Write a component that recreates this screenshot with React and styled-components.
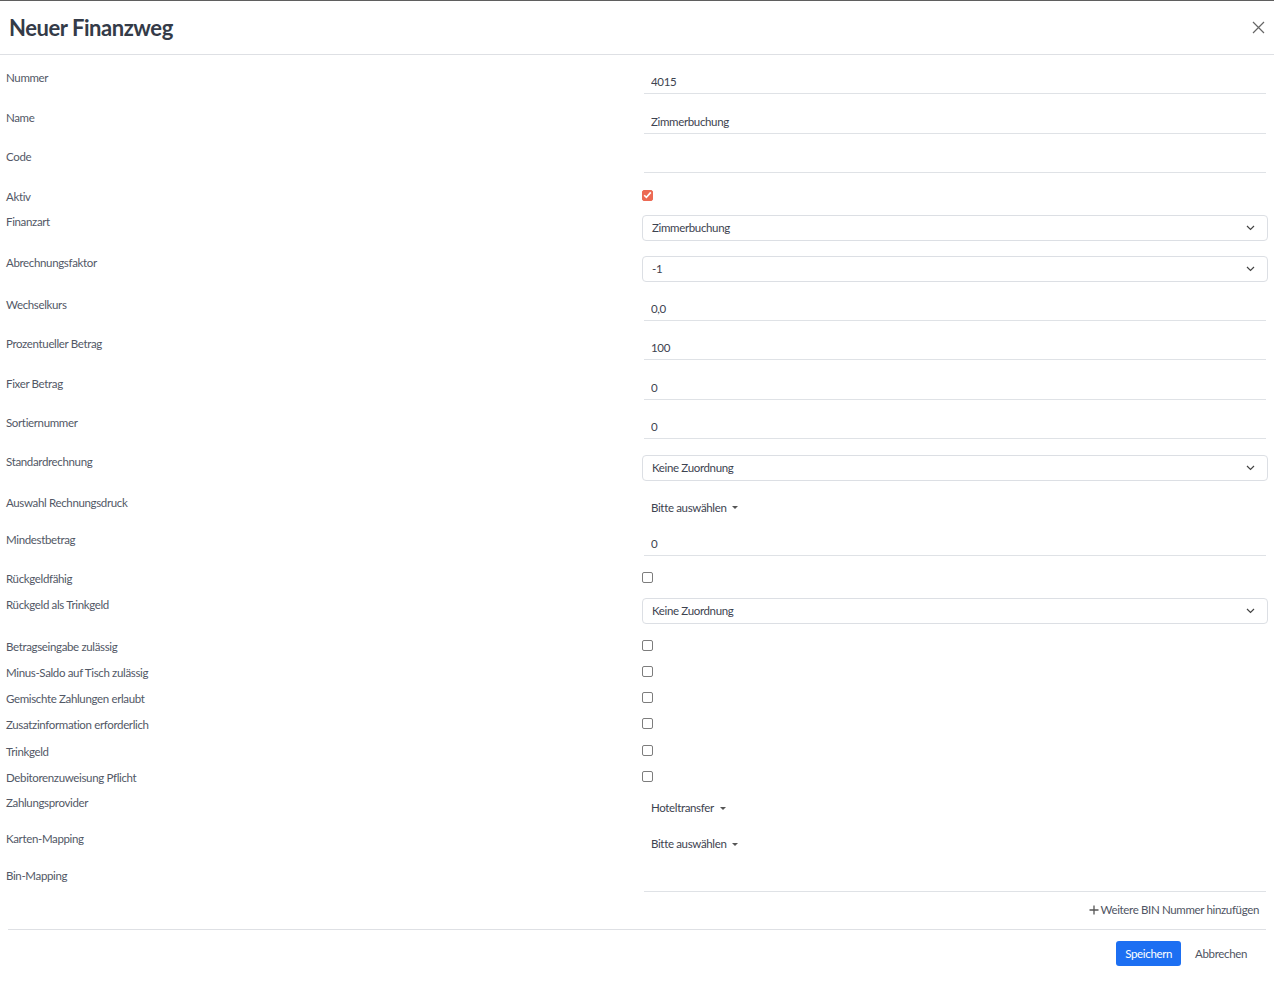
import React from "react";
import styled, { createGlobalStyle } from "styled-components";

const GlobalStyle = createGlobalStyle`
  html, body {
    margin: 0;
    padding: 0;
    background: #ffffff;
  }
  body {
    font-family: Lato, "Liberation Sans", Arial, sans-serif;
    color: #4f5563;
    letter-spacing: -0.35px;
  }
  * {
    box-sizing: border-box;
  }
`;

const Modal = styled.div`
  width: 1274px;
  min-height: 983px;
  border-top: 1px solid #5f5f5f;
  background: #ffffff;
`;

const Header = styled.div`
  display: flex;
  align-items: center;
  justify-content: space-between;
  height: 54px;
  padding: 0 8px 0 9px;
  border-bottom: 1px solid #dee0e4;
`;

const Title = styled.h1`
  margin: 0;
  font-size: 22px;
  font-weight: 700;
  color: #343b48;
  letter-spacing: -0.45px;
`;

const CloseButton = styled.button`
  display: flex;
  align-items: center;
  justify-content: center;
  width: 16px;
  height: 16px;
  padding: 0;
  border: none;
  background: none;
  cursor: pointer;
`;

const Body = styled.div`
  padding: 15px 6px 0 6px;
`;

const Row = styled.div`
  display: grid;
  grid-template-columns: 636px 1fr;
  align-items: start;
  height: ${(p) => p.h}px;
`;

const Label = styled.div`
  font-size: 11.5px;
  line-height: 14px;
  color: #525866;
  padding-top: ${(p) => p.offset || 0}px;
`;

const TextInput = styled.input`
  display: block;
  width: calc(100% - 4px);
  height: 24px;
  margin: 0 2px;
  padding: 0 7px;
  border: none;
  border-bottom: 1px solid #dfe2e6;
  outline: none;
  font-family: inherit;
  font-size: 11.5px;
  letter-spacing: inherit;
  color: #3d4350;
  background: transparent;
`;

const SelectBox = styled.div`
  display: flex;
  align-items: center;
  justify-content: space-between;
  height: 26px;
  padding: 0 12px 0 9px;
  border: 1px solid #dcdfe4;
  border-radius: 4px;
  font-size: 11.5px;
  color: #3d4350;
`;

const CheckBox = styled.span`
  display: flex;
  align-items: center;
  justify-content: center;
  width: 11px;
  height: 11px;
  margin-top: 1px;
  border: 1px solid ${(p) => (p.checked ? "#ec6a54" : "#7d7d7d")};
  border-radius: 2px;
  background: ${(p) => (p.checked ? "#ec6a54" : "#ffffff")};
`;

const Dropdown = styled.div`
  display: flex;
  align-items: center;
  gap: 6px;
  margin-top: 5px;
  padding-left: 9px;
  font-size: 11.5px;
  line-height: 14px;
  color: #3d4350;
`;

const Caret = styled.span`
  width: 0;
  height: 0;
  border-left: 3px solid transparent;
  border-right: 3px solid transparent;
  border-top: 3px solid #555;
`;

const AddRow = styled.div`
  display: flex;
  justify-content: flex-end;
  padding-right: 9px;
  margin-bottom: 12px;
`;

const AddLink = styled.button`
  display: flex;
  align-items: center;
  gap: 2px;
  padding: 0;
  border: none;
  background: none;
  font-family: inherit;
  font-size: 11.5px;
  letter-spacing: inherit;
  line-height: 14px;
  color: #4f5563;
  cursor: pointer;
`;

const Footer = styled.div`
  display: flex;
  justify-content: flex-end;
  align-items: center;
  gap: 2px;
  margin: 0 2px;
  padding-top: 11px;
  border-top: 1px solid #dee0e4;
`;

const Button = styled.button`
  height: 25px;
  padding: 0 ${(p) => (p.primary ? 9 : 12)}px;
  margin-right: ${(p) => (p.primary ? 0 : 7)}px;
  border: none;
  border-radius: 3px;
  background: ${(p) => (p.primary ? "#1d6ff2" : "transparent")};
  color: ${(p) => (p.primary ? "#ffffff" : "#4f5563")};
  font-family: inherit;
  font-size: 11.5px;
  letter-spacing: inherit;
  cursor: pointer;
`;

const Chevron = () => (
  <svg width="9" height="6" viewBox="0 0 9 6" fill="none">
    <path d="M1 1l3.5 3.5L8 1" stroke="#444" strokeWidth="1.2" />
  </svg>
);

const Check = () => (
  <svg width="9" height="8" viewBox="0 0 9 8" fill="none">
    <path d="M1.2 4.2l2.2 2.2L7.8 1.4" stroke="#fff" strokeWidth="1.6" />
  </svg>
);

const H = { text: 39.5, select: 41, check: 26.3, drop: 36 };

const fields = [
  { label: "Nummer", type: "text", value: "4015" },
  { label: "Name", type: "text", value: "Zimmerbuchung" },
  { label: "Code", type: "text", value: "" },
  { label: "Aktiv", type: "check", checked: true },
  { label: "Finanzart", type: "select", value: "Zimmerbuchung" },
  { label: "Abrechnungsfaktor", type: "select", value: "-1" },
  { label: "Wechselkurs", type: "text", value: "0,0" },
  { label: "Prozentueller Betrag", type: "text", value: "100" },
  { label: "Fixer Betrag", type: "text", value: "0" },
  { label: "Sortiernummer", type: "text", value: "0" },
  { label: "Standardrechnung", type: "select", value: "Keine Zuordnung" },
  { label: "Auswahl Rechnungsdruck", type: "drop", value: "Bitte auswählen" },
  { label: "Mindestbetrag", type: "text", value: "0" },
  { label: "Rückgeldfähig", type: "check" },
  { label: "Rückgeld als Trinkgeld", type: "select", value: "Keine Zuordnung" },
  { label: "Betragseingabe zulässig", type: "check" },
  { label: "Minus-Saldo auf Tisch zulässig", type: "check" },
  { label: "Gemischte Zahlungen erlaubt", type: "check" },
  { label: "Zusatzinformation erforderlich", type: "check" },
  { label: "Trinkgeld", type: "check" },
  { label: "Debitorenzuweisung Pflicht", type: "check" },
  { label: "Zahlungsprovider", type: "drop", value: "Hoteltransfer" },
  { label: "Karten-Mapping", type: "drop", value: "Bitte auswählen" },
  { label: "Bin-Mapping", type: "text", value: "", h: 34.5 },
];

const Control = ({ field }) => {
  switch (field.type) {
    case "text":
      return <TextInput defaultValue={field.value} />;
    case "select":
      return (
        <SelectBox>
          <span>{field.value}</span>
          <Chevron />
        </SelectBox>
      );
    case "check":
      return <CheckBox checked={field.checked}>{field.checked && <Check />}</CheckBox>;
    case "drop":
      return (
        <Dropdown>
          {field.value}
          <Caret />
        </Dropdown>
      );
    default:
      return null;
  }
};

const labelOffset = { text: 1, select: 0, check: 1, drop: 0 };

export default function App() {
  return (
    <>
      <GlobalStyle />
      <Modal>
        <Header>
          <Title>Neuer Finanzweg</Title>
          <CloseButton aria-label="Schließen">
            <svg width="13" height="13" viewBox="0 0 13 13" fill="none">
              <path d="M1 1l11 11M12 1L1 12" stroke="#666" strokeWidth="1.2" />
            </svg>
          </CloseButton>
        </Header>
        <Body>
          {fields.map((f) => (
            <Row key={f.label} h={f.h || H[f.type]}>
              <Label offset={labelOffset[f.type]}>{f.label}</Label>
              <Control field={f} />
            </Row>
          ))}
          <AddRow>
            <AddLink>
              <svg width="10" height="10" viewBox="0 0 10 10" fill="none">
                <path d="M5 0.5v9M0.5 5h9" stroke="#555" strokeWidth="1.3" />
              </svg>
              Weitere BIN Nummer hinzufügen
            </AddLink>
          </AddRow>
          <Footer>
            <Button primary>Speichern</Button>
            <Button>Abbrechen</Button>
          </Footer>
        </Body>
      </Modal>
    </>
  );
}
